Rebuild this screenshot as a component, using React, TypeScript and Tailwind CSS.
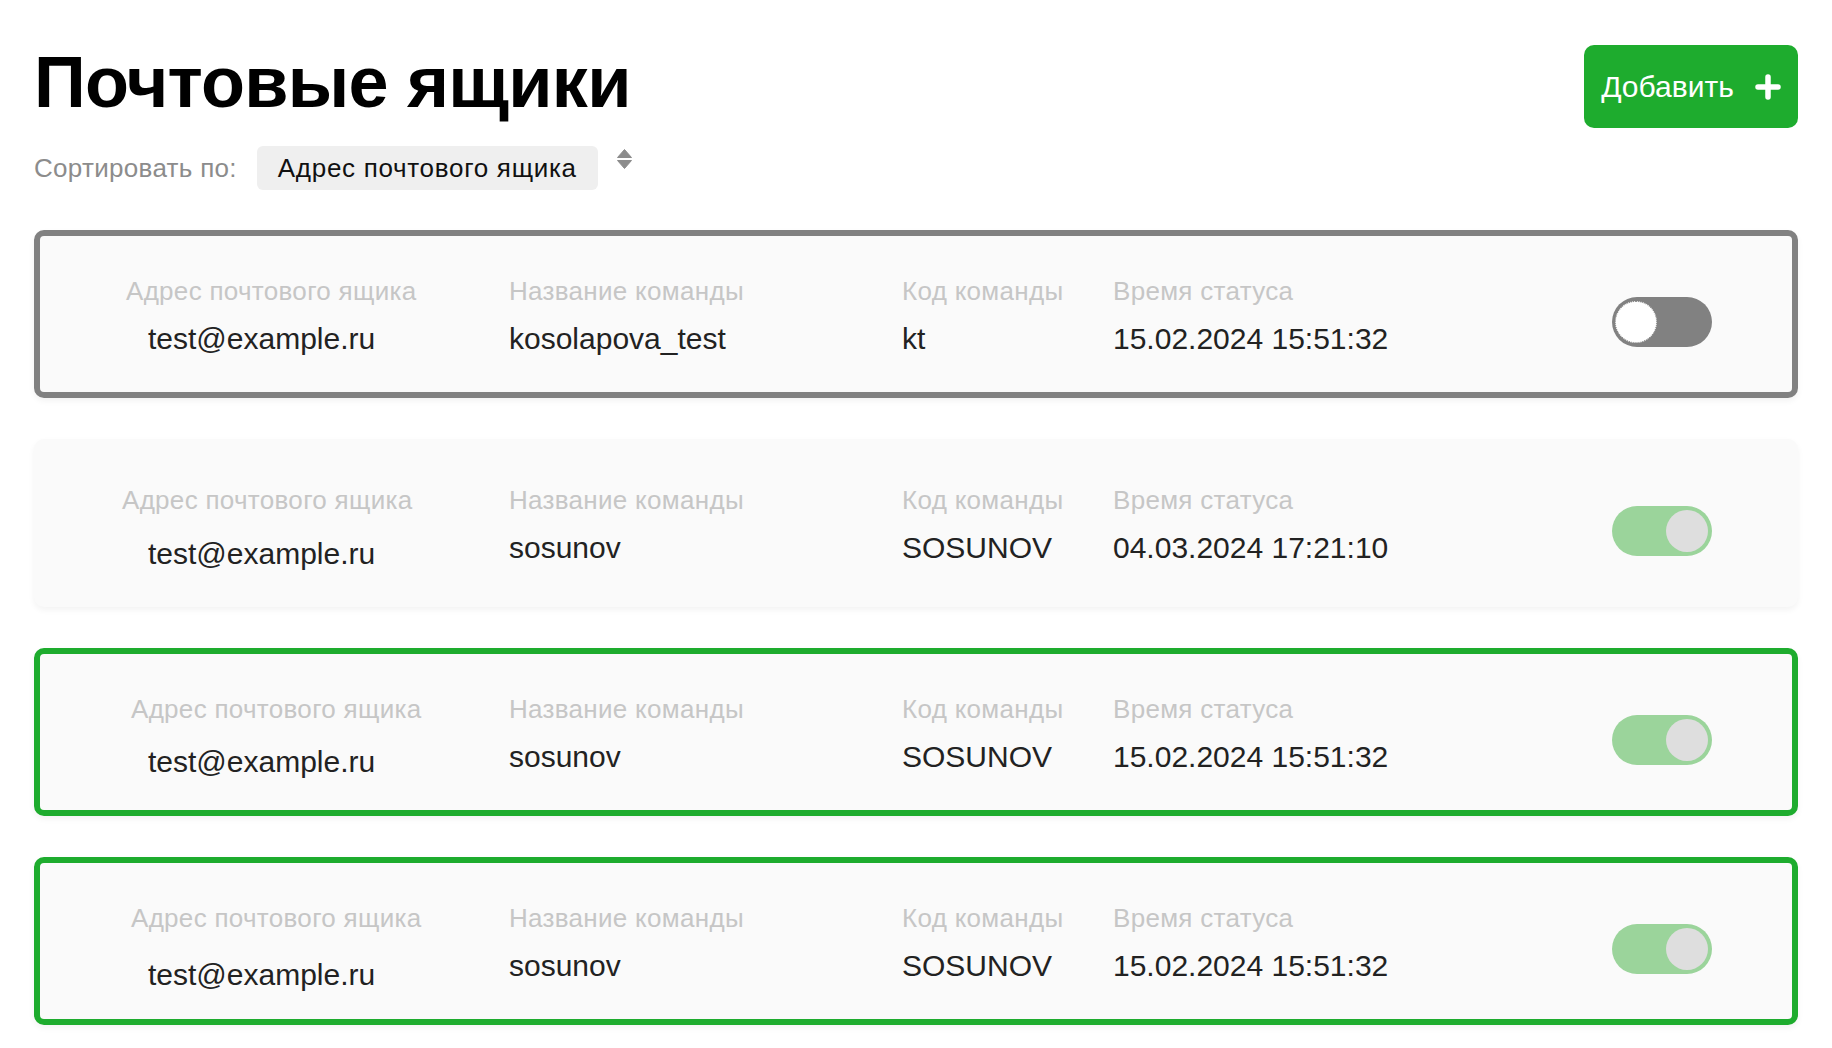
import React from "react";

type Card = {
  kind: "gray" | "none" | "green";
  labelPad: string;
  valueOffset: string;
  email: string;
  team: string;
  code: string;
  time: string;
  on: boolean;
};

const cards: Card[] = [
  {
    kind: "gray",
    labelPad: "pl-[86px]",
    valueOffset: "mt-[20px]",
    email: "test@example.ru",
    team: "kosolapova_test",
    code: "kt",
    time: "15.02.2024 15:51:32",
    on: false,
  },
  {
    kind: "none",
    labelPad: "pl-[82px]",
    valueOffset: "mt-[26px]",
    email: "test@example.ru",
    team: "sosunov",
    code: "SOSUNOV",
    time: "04.03.2024 17:21:10",
    on: true,
  },
  {
    kind: "green",
    labelPad: "pl-[91px]",
    valueOffset: "mt-[25px]",
    email: "test@example.ru",
    team: "sosunov",
    code: "SOSUNOV",
    time: "15.02.2024 15:51:32",
    on: true,
  },
  {
    kind: "green",
    labelPad: "pl-[91px]",
    valueOffset: "mt-[29px]",
    email: "test@example.ru",
    team: "sosunov",
    code: "SOSUNOV",
    time: "15.02.2024 15:51:32",
    on: true,
  },
];

function Toggle({ on }: { on: boolean }) {
  if (on) {
    return (
      <div className="mt-[61px] flex h-[50px] w-[100px] shrink-0 items-center justify-end rounded-full bg-[#9bd49b] px-[4px]">
        <div className="h-[42px] w-[42px] rounded-full bg-[#dedede]" />
      </div>
    );
  }
  return (
    <div className="mt-[61px] flex h-[50px] w-[100px] shrink-0 items-center justify-start rounded-full bg-[#818181] px-[3px]">
      <div className="h-[42px] w-[42px] rounded-full border border-dotted border-[#8a8a8a] bg-white" />
    </div>
  );
}

function MailCard({ c }: { c: Card }) {
  const border =
    c.kind === "gray"
      ? "border-[#818181]"
      : c.kind === "green"
      ? "border-[#1eac2e]"
      : "border-transparent";
  return (
    <div
      className={`flex h-[168px] rounded-[10px] border-[6px] bg-[#fafafa] shadow-[0_3px_6px_rgba(0,0,0,0.05)] ${border}`}
    >
      <div className="flex w-[469px] shrink-0 flex-col pt-[42px]">
        <div className={`text-[26px] leading-none tracking-[0.3px] text-[#c6c6c6] ${c.labelPad}`}>
          Адрес почтового ящика
        </div>
        <div className={`pl-[108px] text-[30px] leading-none text-[#222] ${c.valueOffset}`}>
          {c.email}
        </div>
      </div>
      <div className="flex w-[393px] shrink-0 flex-col pt-[42px]">
        <div className="text-[26px] leading-none tracking-[0.3px] text-[#c6c6c6]">Название команды</div>
        <div className="mt-[20px] text-[30px] leading-none text-[#222]">{c.team}</div>
      </div>
      <div className="flex w-[211px] shrink-0 flex-col pt-[42px]">
        <div className="text-[26px] leading-none tracking-[0.3px] text-[#c6c6c6]">Код команды</div>
        <div className="mt-[20px] text-[30px] leading-none text-[#222]">{c.code}</div>
      </div>
      <div className="flex w-[499px] shrink-0 flex-col pt-[42px]">
        <div className="text-[26px] leading-none tracking-[0.3px] text-[#c6c6c6]">Время статуса</div>
        <div className="mt-[20px] text-[30px] leading-none text-[#222]">{c.time}</div>
      </div>
      <Toggle on={c.on} />
    </div>
  );
}

export default function App() {
  return (
    <div className="min-h-screen w-full bg-white px-[34px] font-['Liberation_Sans',Arial,sans-serif]">
      <div className="flex items-start justify-between pt-[45px]">
        <h1 className="mt-[1px] text-[72px] font-bold leading-none tracking-[-0.75px] text-black">
          Почтовые ящики
        </h1>
        <button className="flex h-[83px] w-[214px] items-center justify-center gap-[21px] rounded-[10px] bg-[#1eac2e] text-[30px] leading-none text-white">
          <span>Добавить</span>
          <svg width="26" height="26" viewBox="0 0 26 26">
            <path
              d="M13 3V23M3 13H23"
              stroke="white"
              strokeWidth="5.5"
              strokeLinecap="round"
              fill="none"
            />
          </svg>
        </button>
      </div>

      <div className="mt-[18px] flex h-[44px] items-center">
        <span className="text-[26px] leading-none tracking-[0.3px] text-[#8c8c8c]">Сортировать по:</span>
        <div className="ml-[20px] flex h-[44px] items-center rounded-[6px] bg-[#efefef] px-[21px] text-[26px] leading-none tracking-[0.7px] text-[#111]">
          Адрес почтового ящика
        </div>
        <svg
          className="ml-[19px] self-start mt-[3px]"
          width="15"
          height="20"
          viewBox="0 0 15 20"
        >
          <path d="M7.5 0.5L14.5 8.5H0.5Z" fill="#8c8c8c" strokeLinejoin="round" stroke="#8c8c8c" strokeWidth="1" />
          <path d="M0.5 11.5H14.5L7.5 19.5Z" fill="#8c8c8c" strokeLinejoin="round" stroke="#8c8c8c" strokeWidth="1" />
        </svg>
      </div>

      <div className="mt-[40px] flex flex-col gap-[41px] pb-[20px]">
        {cards.map((c, i) => (
          <MailCard key={i} c={c} />
        ))}
      </div>
    </div>
  );
}
